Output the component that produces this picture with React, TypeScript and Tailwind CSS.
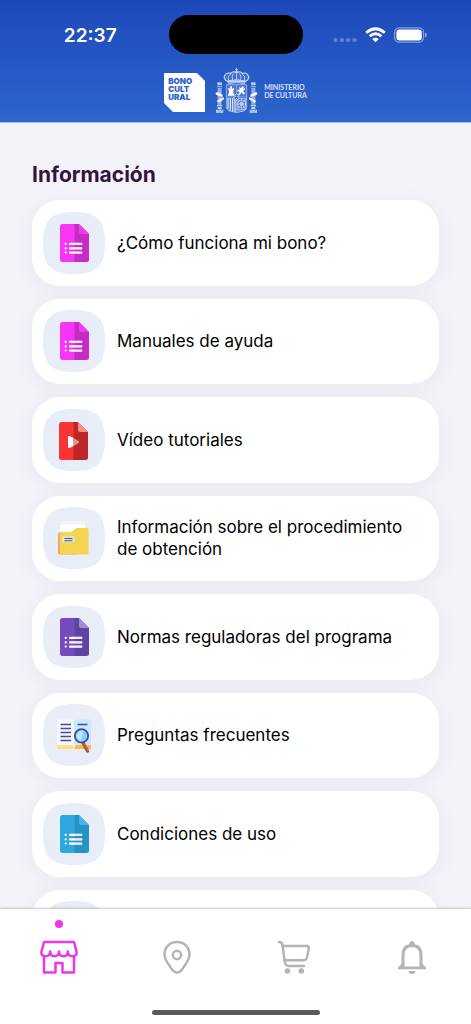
import type { ReactNode } from "react";

function Tile({ children }: { children: ReactNode }) {
  return (
    <svg viewBox="0 0 62 62" className="h-[62px] w-[62px] shrink-0" aria-hidden="true">
      <path d="M0 31C0 8 8 0 31 0S62 8 62 31 54 62 31 62 0 54 0 31Z" fill="#e8edf7" />
      {children}
    </svg>
  );
}

type DocumentColors = { left: string; right: string; fold: string };

function Sheet({ left, right, fold }: DocumentColors) {
  return (
    <>
      <path d="M19.500 12H32V50H19.500Q17 50 17 47.500V14.500Q17 12 19.500 12Z" fill={left} />
      <path d="M31.500 12H36L46 22V47.500Q46 50 43.500 50H31.500Z" fill={right} />
      <path d="M36 12L46 22H38Q36 22 36 20Z" fill={fold} />
    </>
  );
}

function DocumentIcon(colors: DocumentColors) {
  return (
    <Tile>
      <Sheet {...colors} />
      <g fill="#fff">
        <rect x="21.600" y="30.800" width="2.200" height="2.200" rx="1" />
        <rect x="21.600" y="35.200" width="2.200" height="2.200" rx="1" />
        <rect x="21.600" y="39.400" width="2.200" height="2.200" rx="1" />
        <rect x="26" y="30.800" width="13.300" height="2.300" rx="0.800" />
        <rect x="26" y="35.200" width="13.300" height="2.300" rx="0.800" />
        <rect x="26" y="39.400" width="13.300" height="2.300" rx="0.800" />
      </g>
      <g fill="#d9d4ee" opacity="0.500">
        <rect x="31.500" y="30.800" width="7.800" height="2.300" rx="0.800" />
        <rect x="31.500" y="35.200" width="7.800" height="2.300" rx="0.800" />
        <rect x="31.500" y="39.400" width="7.800" height="2.300" rx="0.800" />
      </g>
    </Tile>
  );
}

function VideoIcon() {
  return (
    <Tile>
      <g transform="translate(-1 1)">
        <Sheet left="#f93434" right="#bd2727" fold="#ff8b8b" />
        <path d="M26 27Q26 25.500 27.500 26L31.500 28V36L27.500 38Q26 38.500 26 37Z" fill="#fff" />
        <path d="M31.500 28L36.500 31Q37.500 32 36.500 33L31.500 36Z" fill="#d99a9a" />
      </g>
    </Tile>
  );
}

function FolderIcon() {
  return (
    <Tile>
      <path d="M19 14.500H42V32H17V17.500H19Z" fill="#fff" />
      <path d="M19 14.500H42V17.500H19Z" fill="#f4f5f8" />
      <path d="M17 25.500H27L34 22V47.500H17Q15 47.500 15 45.500V27.500Q15 25.500 17 25.500Z" fill="#eda451" />
      <path d="M18.500 25.500H27Q28.500 25.500 29.500 24.500L32 22Q33 21 34.500 21H43.500Q45.500 21 45.500 23V45.500Q45.500 47.500 43.500 47.500H18.500Q16.800 47.500 16.800 45.500V27.500Q16.800 25.500 18.500 25.500Z" fill="#f4d451" />
      <rect x="19" y="29.500" width="12.800" height="6" rx="1.800" fill="#dce6e9" />
      <path d="M21.500 31.500H29.500M21.500 33.800H29.500" stroke="#405d6b" strokeWidth="1.100" />
    </Tile>
  );
}

function BookIcon() {
  return (
    <Tile>
      <path d="M14 15.500H28Q31 15.500 31 18V41H14Z" fill="#f3f8ff" />
      <path d="M31 18Q31 15.500 34 15.500H48V41H31Z" fill="#c8eafd" />
      <path d="M14 41H28Q30.500 41 30.500 45H14Z" fill="#ffe079" />
      <path d="M48 41H34Q31.500 41 31.500 45H48Z" fill="#ffbd32" />
      <path d="M17.500 20.500H28M17.500 24.500H28M17.500 28.500H28M17.500 32.500H28M17.500 36.500H28M34.500 20.500H44.500" stroke="#5146a3" strokeWidth="1.500" />
      <path d="M39.800 38.500L44.500 47" stroke="#a4553a" strokeWidth="3.400" strokeLinecap="round" />
      <path d="M40.600 38.500L45.300 47" stroke="#c97a57" strokeWidth="1" />
      <circle cx="38.500" cy="31.800" r="6.700" fill="#8bd1ff" stroke="#4c449d" strokeWidth="1.700" />
      <path d="M34 31A5 5 0 0 1 40 27L38 37Q34 36 34 31Z" fill="#bce9ff" />
    </Tile>
  );
}

const pink = { left: "#f735f4", right: "#c62bc5", fold: "#f735f4" };
const purple = { left: "#764bbd", right: "#6142a5", fold: "#a38bd5" };
const blue = { left: "#30a7de", right: "#2594c5", fold: "#43b7ef" };

const entries = [
  { label: "¿Cómo funciona mi bono?", icon: <DocumentIcon {...pink} /> },
  { label: "Manuales de ayuda", icon: <DocumentIcon {...pink} /> },
  { label: "Vídeo tutoriales", icon: <VideoIcon /> },
  { label: "Información sobre el procedimiento de obtención", icon: <FolderIcon /> },
  { label: "Normas reguladoras del programa", icon: <DocumentIcon {...purple} /> },
  { label: "Preguntas frecuentes", icon: <BookIcon /> },
  { label: "Condiciones de uso", icon: <DocumentIcon {...blue} /> },
  { label: "", icon: <Tile>{null}</Tile> },
];

function Pillar() {
  return (
    <g>
      <path d="M8 43h12l2 5-3 4H9l-3-4Z" fill="#fff" opacity=".65" />
      <path d="M6 54h16v4H6ZM8 60h12v50H8Z" fill="#fff" opacity=".5" />
      <path d="M6 111h16v4H6ZM8 117h12v6H8ZM3 125h22v9H3Z" fill="#fff" opacity=".75" />
      <path d="M5 130q3-4 6 0t6 0 7 0" fill="none" stroke="#2c61c8" strokeWidth="1.500" />
      <path d="M2 74q5-4 9 0l12 6v7L6 82q-5-2-4-8ZM26 88q4 5-3 9l-13 7-5-5 15-9Z" fill="#fff" opacity=".9" />
    </g>
  );
}

function Crest() {
  return (
    <svg viewBox="0 0 129 135" className="h-[45px] w-[43px] shrink-0" role="img" aria-label="Escudo de España">
      <Pillar />
      <g transform="translate(129 0) scale(-1 1)">
        <Pillar />
      </g>
      <g fill="none" stroke="#fff" strokeWidth="2.400" opacity=".75">
        <path d="M64.500 0v14M60 5h9" />
        <circle cx="64.500" cy="12" r="3" fill="#fff" />
        <path d="M37 40Q24 32 29 23Q34 12 47 16Q54 8 64.500 14Q75 8 82 16Q95 12 100 23Q105 32 92 40Z" fill="#fff" fillOpacity=".18" strokeWidth="3.500" />
        <path d="M41 38Q35 26 47 18M53 36Q49 24 55 17M64.500 16v20M76 36Q80 24 74 17M88 38Q94 26 82 18" />
        <path d="M38 39Q64 31 91 39L89 47Q64 41 40 47Z" fill="#fff" fillOpacity=".55" />
      </g>
      <path d="M34 50h61v66q0 14-18 15l-12.500 4-12.500-4q-18-1-18-15Z" fill="#fff" fillOpacity=".16" stroke="#fff" strokeOpacity=".65" strokeWidth="2" />
      <path d="M64.500 50v85M34 87h61" stroke="#fff" strokeOpacity=".6" strokeWidth="1.500" />
      <path d="M39 83v-6h3V66h-2v-6h4v3h2v-8h5v8h2v-3h4v6h-2v11h3v6Z" fill="#fff" />
      <path d="M72 57l5 4 5-6 5 3-3 5 6-3v4l-6 5 6 7-4 4-6-7-5 7-6 1 5-8-4-4-4 2 2-6 6 1Z" fill="#fff" />
      <path d="M39 90v32M46 90v39M53 90v41M60 91v41" stroke="#fff" strokeOpacity=".85" strokeWidth="3.500" />
      <g fill="none" stroke="#fff" strokeOpacity=".65" strokeWidth="2">
        <circle cx="80" cy="108" r="12" />
        <circle cx="80" cy="108" r="5" />
        <path d="M68 92v32h24V92ZM68 92l24 32M92 92l-24 32M80 91v35M67 108h26" />
        <path d="M67 128q12 6 24-5" />
      </g>
      <ellipse cx="64.500" cy="87" rx="7" ry="9" fill="#2b60c7" stroke="#fff" strokeOpacity=".85" strokeWidth="2" />
      <path d="M60 83h3v3h-3ZM66 83h3v3h-3ZM63 90h3v3h-3Z" fill="#fff" />
    </svg>
  );
}

function StatusBar() {
  return (
    <div className="grid grid-cols-[1fr_134px_1fr] items-center pt-[15px] text-white">
      <time className="pt-[2px] pl-3 text-center text-[19px] leading-6 font-semibold">22:37</time>
      <div className="h-[39px] rounded-full bg-black" />
      <div className="flex items-center justify-end gap-2 pr-11">
        <svg viewBox="0 0 24 16" className="h-4 w-6" fill="#fff" opacity=".27" aria-hidden="true">
          <rect x="0.500" y="11" width="4" height="4" rx="1.500" />
          <rect x="6.800" y="11" width="4" height="4" rx="1.500" />
          <rect x="13.100" y="11" width="4" height="4" rx="1.500" />
          <rect x="19.500" y="11" width="4" height="4" rx="1.500" />
        </svg>
        <svg viewBox="0 0 21 16" className="h-4 w-[21px]" fill="none" stroke="#fff" strokeWidth="2.800" aria-label="Wi-Fi">
          <path d="M1.200 5.800Q10.500-2.200 19.800 5.800M4.600 9.200Q10.500 4.200 16.400 9.200" />
          <path d="M7.200 12Q10.500 9.400 13.800 12L10.500 15.300Z" fill="#fff" stroke="none" />
        </svg>
        <svg viewBox="0 0 33 16" className="h-4 w-[33px]" aria-label="Batería">
          <rect x="0.600" y="0.800" width="29" height="14.400" rx="4.600" fill="none" stroke="#fff" strokeOpacity=".45" strokeWidth="1.200" />
          <rect x="2.400" y="2.600" width="25.400" height="10.800" rx="3" fill="#fff" />
          <path d="M31 5.500q2 .8 2 2.500t-2 2.500Z" fill="#fff" opacity=".5" />
        </svg>
      </div>
    </div>
  );
}

function Brand() {
  return (
    <div className="flex items-center justify-center pt-[14px]">
      <div className="pt-1">
        <div className="relative h-[39px] w-[41px]">
          <svg viewBox="0 0 41 39" className="absolute inset-0 h-full w-full" aria-hidden="true">
            <path d="M0 0H33L41 8V39H9L0 30Z" fill="#fff" />
          </svg>
          <p className="relative pt-1 pl-1 text-[8px] leading-[8px] font-black text-[#2d62c9]">
            BONO
            <br />
            CULT
            <br />
            URAL
          </p>
        </div>
      </div>
      <div className="flex items-center gap-[6px] pl-[10px]">
        <Crest />
        <p className="font-[Lato,sans-serif] text-[7px] leading-[8px] font-bold text-white/80">
          MINISTERIO
          <br />
          DE CULTURA
        </p>
      </div>
    </div>
  );
}

function StoreIcon() {
  return (
    <svg viewBox="0 0 38 34" className="h-[34px] w-[38px]" fill="none" stroke="#ee35ea" strokeWidth="2.500" strokeLinejoin="round" aria-hidden="true">
      <path d="M4 2H34L36.600 12Q37 16.300 32.500 16.300Q28 16.300 27.800 11.500Q27.500 16.300 23.500 16.300Q19.300 16.300 19 11.500Q18.700 16.300 14.500 16.300Q10.500 16.300 10.200 11.500Q10 16.300 5.500 16.300Q1 16.300 1.400 12Z" />
      <path d="M4 16.300V32.500H15.500V23H22.500V32.500H34V16.300" />
    </svg>
  );
}

function PinIcon() {
  return (
    <svg viewBox="0 0 28 34" className="h-[34px] w-7" fill="none" stroke="#b4b4b4" strokeWidth="2.500" aria-hidden="true">
      <path d="M14 2C6.500 2 1.500 7.500 1.500 14.500C1.500 20 5.500 24.500 9.500 30.200Q14 35.200 18.500 30.200C22.500 24.500 26.500 20 26.500 14.500C26.500 7.500 21.500 2 14 2Z" />
      <circle cx="14" cy="15" r="4.200" />
    </svg>
  );
}

function CartIcon() {
  return (
    <svg viewBox="0 0 34 34" className="h-[34px] w-[34px]" fill="none" stroke="#b4b4b4" strokeWidth="2.400" strokeLinecap="round" strokeLinejoin="round" aria-hidden="true">
      <path d="M2 2Q5 1.800 5.500 5L7.800 22Q8.500 26 12 26H27" />
      <path d="M5.800 6H30Q32 6 31.800 8L30 17.500Q29.200 20.300 26.500 20.300H7.500" />
      <circle cx="10.500" cy="31" r="2.800" fill="#b4b4b4" stroke="none" />
      <circle cx="24.300" cy="31" r="2.800" fill="#b4b4b4" stroke="none" />
    </svg>
  );
}

function BellIcon() {
  return (
    <svg viewBox="0 0 28 34" className="h-[34px] w-7" fill="none" stroke="#b4b4b4" strokeWidth="3" aria-hidden="true">
      <path d="M5 27V15.500Q5 5.500 14 5.500Q23 5.500 23 15.500V27" />
      <path d="M11.500 5V3.500a2.500 2.500 0 0 1 5 0V5ZM4 23.500L0 27.500V29.300H28V27.500L24 23.500L22.500 26.500H5.500ZM10.500 31H17.500Q17 34 14 34T10.500 31Z" fill="#b4b4b4" stroke="none" />
    </svg>
  );
}

const tabs = [
  { label: "Inicio", icon: <StoreIcon />, active: true },
  { label: "Mapa", icon: <PinIcon />, active: false },
  { label: "Compras", icon: <CartIcon />, active: false },
  { label: "Avisos", icon: <BellIcon />, active: false },
];

export default function App() {
  return (
    <div className="flex h-dvh flex-col overflow-hidden bg-[#f3f4fa] font-[Inter,sans-serif]">
      <header className="shrink-0 border-b border-[#a9bce8] bg-linear-to-b from-[#1e48ba] to-[#2d66cc] pb-[9px]">
        <StatusBar />
        <Brand />
      </header>

      <main className="min-h-0 flex-1 overflow-y-auto px-8 pt-9 pb-8 [scrollbar-width:none]">
        <h1 className="text-[21px] leading-8 font-bold text-[#35133f]">Información</h1>
        <ul className="mt-[9px] grid min-h-[775px] auto-rows-fr gap-[13px]">
          {entries.map((entry, index) => (
            <li key={index} className="flex">
              <button
                type="button"
                aria-label={entry.label || "Más información"}
                className="flex w-full items-center gap-3 rounded-[28px] bg-white py-[11px] pr-5 pl-[11px] text-left text-[17px] leading-[22px] text-black shadow-[0_4px_24px_rgba(40,30,60,0.05)]"
              >
                {entry.icon}
                <span>{entry.label}</span>
              </button>
            </li>
          ))}
        </ul>
      </main>

      <footer className="relative shrink-0 bg-white pb-[9px] shadow-[0_-1px_2px_rgba(0,0,0,0.2)]">
        <nav className="grid grid-cols-4">
          {tabs.map((tab) => (
            <button
              key={tab.label}
              type="button"
              aria-label={tab.label}
              aria-current={tab.active ? "page" : undefined}
              className="flex h-[101px] flex-col items-center gap-3 pt-[11px]"
            >
              <span className={tab.active ? "h-2 w-2 rounded-full bg-[#ee35ea]" : "h-2 w-2"} />
              {tab.icon}
            </button>
          ))}
        </nav>
        <div className="mx-auto h-[5px] w-[168px] rounded-full bg-[#5a5a5a]" />
      </footer>
    </div>
  );
}
